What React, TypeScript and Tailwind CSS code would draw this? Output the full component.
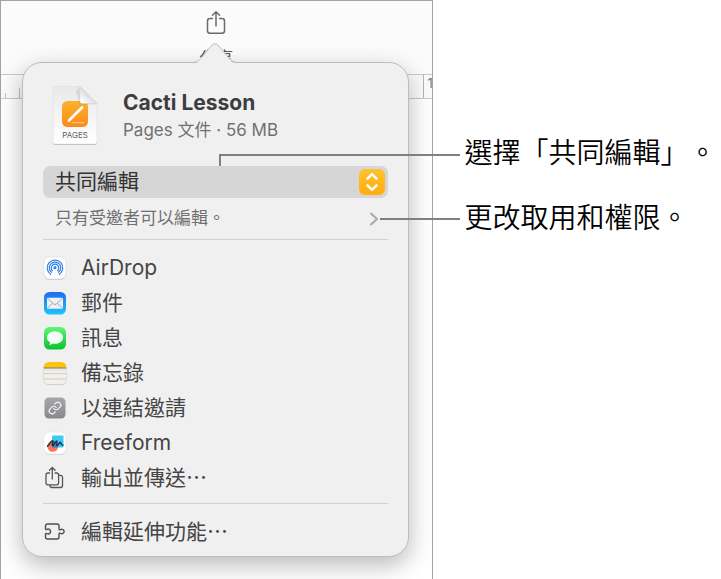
import type { ReactNode } from "react";

type ShareTarget = {
  id: string;
  label: string;
  icon: ReactNode;
};

function ShareIcon() {
  return (
    <svg viewBox="0 0 20 26" className="h-[26px] w-5" fill="none" stroke="#6b6b6b" strokeWidth="1.5" strokeLinecap="round" strokeLinejoin="round">
      <path d="M6.5 8.500H4A2.500 2.500 0 0 0 1.500 11v9.700A2.500 2.500 0 0 0 4 23.200h12a2.500 2.500 0 0 0 2.500-2.500V11A2.500 2.500 0 0 0 16 8.500h-2.500" />
      <path d="M10 16V2M6.500 5.200 10 1.700l3.500 3.500" />
    </svg>
  );
}

function DocumentIcon() {
  return (
    <svg viewBox="0 0 46 62" className="h-[62px] w-[46px] shrink-0">
      <defs>
        <linearGradient id="docPaper" x1="0" y1="0" x2="0" y2="1">
          <stop offset="0" stopColor="#e9e9e9" />
          <stop offset="1" stopColor="#ffffff" />
        </linearGradient>
        <linearGradient id="docBadge" x1="0" y1="0" x2="0" y2="1">
          <stop offset="0" stopColor="#fdb22b" />
          <stop offset="1" stopColor="#fb8a1c" />
        </linearGradient>
        <linearGradient id="docFold" x1="0" y1="1" x2="1" y2="0">
          <stop offset="0.1" stopColor="#ffffff" />
          <stop offset="0.5" stopColor="#dddddd" />
        </linearGradient>
      </defs>
      <path d="M1 5a2 2 0 0 1 2-2h25l17 17v38a2 2 0 0 1-2 2H3a2 2 0 0 1-2-2z" fill="#bdbdbd" />
      <path d="M1 3.500a2 2 0 0 1 2-2h25l17 17v38.500a2 2 0 0 1-2 2H3a2 2 0 0 1-2-2z" fill="url(#docPaper)" stroke="#d8d8d8" strokeWidth="0.5" />
      <rect x="10" y="16" width="26" height="26" rx="5.500" fill="url(#docBadge)" />
      <path d="M24 6 28 1.500 45 18.500l-3 1H27z" fill="#000" opacity="0.08" />
      <path d="M28 1.500 45 18.500H30a2 2 0 0 1-2-2z" fill="url(#docFold)" stroke="#d4d4d4" strokeWidth="0.5" />
      <path d="m17.500 35 12.500-12.500" stroke="#fff" strokeWidth="2.800" strokeLinecap="round" />
      <path d="m15.300 37.300 1-2.800 1.800 1.800z" fill="#fff" />
      <path d="M19.500 37.700H32" stroke="#fff" strokeWidth="0.800" opacity="0.700" />
      <text x="23" y="53" textAnchor="middle" fontFamily="Inter, sans-serif" fontSize="8" fill="#5e5e5e">
        PAGES
      </text>
    </svg>
  );
}

function AirDropIcon() {
  return (
    <svg viewBox="0 0 24 24" className="size-6">
      <rect x="1" y="1.800" width="22" height="22" rx="5.500" fill="#c4c4c4" />
      <rect x="1" y="1" width="22" height="22" rx="5.500" fill="#fdfdfd" stroke="#d6d6d6" strokeWidth="0.500" />
      <g fill="none" stroke="#2f80e6" strokeWidth="1.200" strokeLinecap="round">
        <path d="M7.800 18.400A7.800 7.800 0 1 1 16.200 18.400" />
        <path d="M8.500 16.300A5.700 5.700 0 1 1 15.500 16.300" />
        <path d="M9.400 14.500A3.700 3.700 0 1 1 14.600 14.500" />
      </g>
      <path d="m12 12.500 3.800 6.200H8.200z" fill="#fdfdfd" />
      <circle cx="12" cy="11.700" r="1.600" fill="#2f80e6" />
    </svg>
  );
}

function MailIcon() {
  return (
    <svg viewBox="0 0 24 24" className="size-6">
      <defs>
        <linearGradient id="mailBg" x1="0" y1="0" x2="0" y2="1">
          <stop offset="0" stopColor="#1e6df2" />
          <stop offset="1" stopColor="#1cc5fb" />
        </linearGradient>
      </defs>
      <rect x="1" y="1" width="22" height="22.500" rx="5.500" fill="url(#mailBg)" />
      <rect x="4" y="6.700" width="16" height="11" rx="1.200" fill="#eef0f2" />
      <g fill="none" stroke="#98a0a8" strokeWidth="0.900">
        <path d="m4.500 7.200 6.200 5.800a2 2 0 0 0 2.600 0l6.200-5.800" />
        <path d="m4.600 17.200 5-5M19.400 17.200l-5-5" />
      </g>
    </svg>
  );
}

function MessagesIcon() {
  return (
    <svg viewBox="0 0 24 24" className="size-6">
      <defs>
        <linearGradient id="msgBg" x1="0" y1="0" x2="0" y2="1">
          <stop offset="0" stopColor="#5ff777" />
          <stop offset="1" stopColor="#0cc02b" />
        </linearGradient>
      </defs>
      <rect x="1" y="1" width="22" height="22.500" rx="5.500" fill="url(#msgBg)" />
      <path d="M12 5.200c4.500 0 8 2.800 8 6.300s-3.500 6.300-8 6.300c-.8 0-1.600-.1-2.300-.3-.9.900-2.200 1.400-3.500 1.400.6-.6 1-1.400 1-2.300C5.200 15.400 4 13.600 4 11.500c0-3.500 3.500-6.300 8-6.300z" fill="#f4fff5" />
    </svg>
  );
}

function NotesIcon() {
  return (
    <svg viewBox="0 0 24 24" className="size-6">
      <defs>
        <clipPath id="notesClip">
          <rect x="0.500" y="1" width="23" height="22.500" rx="5.500" />
        </clipPath>
      </defs>
      <rect x="0.500" y="1.700" width="23" height="22.300" rx="5.500" fill="#c4c4c0" />
      <g clipPath="url(#notesClip)">
        <rect x="0.500" y="1" width="23" height="22.500" fill="#f1f0ea" />
        <rect x="0.500" y="1" width="23" height="5.800" fill="#fcc40f" />
        <rect x="0.500" y="6.500" width="23" height="1" fill="#77735e" />
        <path d="M1.500 9h21" stroke="#a9a8a2" strokeWidth="0.700" strokeDasharray="0.700 1.300" />
        <path d="M1 12.700h22M1 18h22" stroke="#c8c7c0" strokeWidth="0.900" />
      </g>
    </svg>
  );
}

function LinkIcon() {
  return (
    <svg viewBox="0 0 24 24" className="size-6">
      <defs>
        <linearGradient id="linkBg" x1="0" y1="0" x2="0" y2="1">
          <stop offset="0" stopColor="#a5a5aa" />
          <stop offset="1" stopColor="#88888d" />
        </linearGradient>
      </defs>
      <rect x="1.500" y="1.500" width="21" height="21" rx="4.500" fill="url(#linkBg)" />
      <g transform="translate(5 5) scale(0.583)" fill="none" stroke="#f4f4f4" strokeWidth="2" strokeLinecap="round" strokeLinejoin="round">
        <path d="M10 13a5 5 0 0 0 7.540.540l3-3a5 5 0 0 0-7.070-7.070l-1.720 1.710" />
        <path d="M14 11a5 5 0 0 0-7.540-.540l-3 3a5 5 0 0 0 7.070 7.070l1.710-1.710" />
      </g>
    </svg>
  );
}

function FreeformIcon() {
  return (
    <svg viewBox="0 0 24 24" className="size-6">
      <rect x="1" y="1.800" width="22" height="22" rx="5.500" fill="#cccccc" />
      <rect x="1" y="1" width="22" height="22" rx="5.500" fill="#fff" stroke="#e0e0e0" strokeWidth="0.500" />
      <rect x="9" y="4.500" width="11.500" height="12" rx="1" fill="#41c8f5" />
      <circle cx="9.800" cy="15.300" r="5.500" fill="#fb7658" />
      <path d="M9 10a5.500 5.500 0 0 1 6.100 6.500H9z" fill="#3d7fae" />
      <path d="M4.500 15.200c1.800-1 3.300-5.500 4.900-5.500s-1.200 4.900.3 4.900 2.700-5 4-4.700-1 4.700.5 4.700 2-3.500 3.100-3.400.2 3.200 2.800 2.900" fill="none" stroke="#14364e" strokeWidth="1.400" strokeLinecap="round" strokeLinejoin="round" />
    </svg>
  );
}

function ExportIcon() {
  return (
    <svg viewBox="0 0 24 24" className="size-6" fill="none" stroke="#555" strokeWidth="1.300" strokeLinecap="round" strokeLinejoin="round">
      <path d="M6.500 7H5a2 2 0 0 0-2 2v7.800a2 2 0 0 0 2 2h8.600a2 2 0 0 0 2-2V9a2 2 0 0 0-2-2h-1.500" />
      <path d="M9.300 13V1.700M6.500 4.300l2.800-2.800 2.800 2.800" />
      <path d="M16 9.300h1.500a2 2 0 0 1 2 2v8.200a2 2 0 0 1-2 2H9a2 2 0 0 1-2-2v-.4" />
    </svg>
  );
}

function ExtensionIcon() {
  return (
    <svg viewBox="0 0 24 24" className="size-6" fill="none" stroke="#4d4d4d" strokeWidth="1.400" strokeLinejoin="round">
      <path d="M2.500 8.700V6a2 2 0 0 1 2-2H14a2 2 0 0 1 2 2v3c.1.800.8.900 1.400.6 1.800-1 3.700.2 3.700 1.900s-1.900 2.900-3.700 1.900c-.6-.3-1.300-.2-1.400.6v3a2 2 0 0 1-2 2H4.500a2 2 0 0 1-2-2v-2.700c.1-.9.900-1 1.500-.6 1.700.9 3.600-.4 3.600-2.200S5.700 8.400 4 9.300c-.6.400-1.400.300-1.500-.6z" />
    </svg>
  );
}

const targets: ShareTarget[] = [
  { id: "airdrop", label: "AirDrop", icon: <AirDropIcon /> },
  { id: "mail", label: "郵件", icon: <MailIcon /> },
  { id: "messages", label: "訊息", icon: <MessagesIcon /> },
  { id: "notes", label: "備忘錄", icon: <NotesIcon /> },
  { id: "link", label: "以連結邀請", icon: <LinkIcon /> },
  { id: "freeform", label: "Freeform", icon: <FreeformIcon /> },
  { id: "export", label: "輸出並傳送⋯", icon: <ExportIcon /> },
];

function ShareRow({ label, icon }: Omit<ShareTarget, "id">) {
  return (
    <button
      type="button"
      className="flex h-[35px] w-full items-center gap-[14px] text-left text-[21px] leading-none whitespace-nowrap text-[#454545]"
    >
      {icon}
      <span>{label}</span>
    </button>
  );
}

function SharePopover() {
  return (
    <section
      aria-label="分享"
      className="absolute top-[61px] right-[23px] left-[21px] rounded-[20px] border border-[#bdbdbd] bg-[#f0f0f0] px-5 pb-[7px] shadow-[0_8px_24px_rgba(0,0,0,0.28)]"
    >
      <svg viewBox="0 0 46 21" className="absolute -top-5 left-1/2 h-[21px] w-[46px] -translate-x-1/2">
        <path d="M0 20.500c5 0 7-2.500 9-5L19 3.500c2.500-3.300 5.500-3.300 8 0l10 12c2 2.500 4 5 9 5V21H0z" fill="#f0f0f0" />
        <path d="M0 19.500c5 0 7-2 9-4.500L19 3.200c2.500-3.200 5.500-3.200 8 0L37 15c2 2.500 4 4.500 9 4.500" fill="none" stroke="#bdbdbd" />
      </svg>

      <header className="flex items-center gap-[25px] pt-[22px] pl-[9px]">
        <DocumentIcon />
        <div className="whitespace-nowrap">
          <h1 className="text-[21px] leading-7 font-bold text-[#3d3d3d]">Cacti Lesson</h1>
          <p className="text-[17px] leading-[26px] text-[#707070]">Pages 文件 · 56 MB</p>
        </div>
      </header>

      <div className="relative mt-[19px]">
        <select
          id="share-mode"
          aria-label="分享方式"
          className="block h-8 w-full appearance-none rounded-[7px] bg-[#d6d6d6] pl-3 text-[21px] text-[#333]"
        >
          <option>共同編輯</option>
        </select>
        <span className="pointer-events-none absolute top-[3px] right-[3px] flex size-[26px] items-center justify-center rounded-md bg-linear-to-b from-[#ffc02d] to-[#ffae0a]">
          <svg viewBox="0 0 26 26" className="size-[26px]" fill="none" stroke="#fff" strokeWidth="2.400" strokeLinecap="round" strokeLinejoin="round">
            <path d="m8.500 9.700 4.500-4.500 4.500 4.500M8.500 16.300l4.500 4.500 4.500-4.500" />
          </svg>
        </span>
        <span className="absolute -top-3 left-[176px] h-3 w-[241px] border-t-2 border-l-2 border-[#808080]" />
      </div>

      <div className="relative">
        <button type="button" className="flex h-[41px] w-full items-center justify-between pr-[9px] pl-3 text-[17px] whitespace-nowrap text-[#707070]">
          <span>只有受邀者可以編輯。</span>
          <svg viewBox="0 0 10 16" className="h-4 w-[10px]" fill="none" stroke="#a8a8a8" strokeWidth="2" strokeLinecap="round" strokeLinejoin="round">
            <path d="m2 2.500 6 5.500-6 5.500" />
          </svg>
        </button>
        <span className="absolute top-5 left-[337px] w-20 border-t-2 border-[#808080]" />
      </div>

      <ul className="border-t border-[#d2d2d2] pt-[10px] pb-2">
        {targets.map((target) => (
          <li key={target.id}>
            <ShareRow label={target.label} icon={target.icon} />
          </li>
        ))}
      </ul>
      <div className="border-t border-[#d2d2d2] pt-[10px]">
        <ShareRow label="編輯延伸功能⋯" icon={<ExtensionIcon />} />
      </div>
    </section>
  );
}

export default function App() {
  return (
    <div className="flex min-h-screen overflow-hidden bg-white font-['Inter','Noto_Sans_CJK_TC',sans-serif]">
      <main className="relative w-3/5 border-t border-r border-l border-[#a3a3a3] bg-white">
        <div className="flex h-[73px] flex-col items-center bg-[#fbfbfb] pt-[9px] text-[#555]">
          <button type="button" className="flex flex-col items-center text-[17px] leading-5">
            <ShareIcon />
            <span className="mt-3">分享</span>
          </button>
        </div>
        <div className="flex h-[25px] justify-between border-y border-[#c9c9c9] bg-[#fbfbfb]">
          <div className="flex items-end gap-[13px] pl-1">
            <span className="h-[5px] border-l border-[#c0c0c0]" />
            <span className="h-[10px] border-l border-[#c0c0c0]" />
          </div>
          <span className="w-[9px] overflow-hidden border-l border-[#b5b5b5] pl-1 text-[13px] leading-[17px] text-[#777]">1</span>
        </div>
        <SharePopover />
      </main>

      <aside className="flex-1 pt-[121px] pl-8 text-[28px] leading-[65px] font-[350] whitespace-nowrap text-black [text-spacing-trim:space-all]">
        <p>選擇「共同編輯」。</p>
        <p>更改取用和權限。</p>
      </aside>
    </div>
  );
}
